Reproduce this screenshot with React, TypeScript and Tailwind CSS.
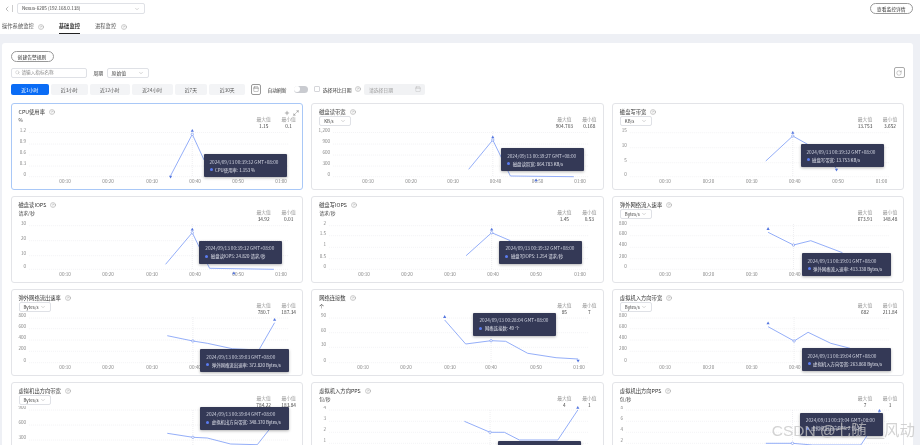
import { ChevronDown, ChevronLeft, CircleHelp, Calendar, RotateCw, Plus, Maximize2, Search } from 'lucide-react';

type Pt = [number, number];

type Chart = {
    title: string;
    unit?: string;
    select?: string;
    max: string;
    min: string;
    yLabels: string[];
    gridY: number[];
    gridX: [number, number];
    xLabels: number[];
    line: Pt[];
    ups?: Pt[];
    downs?: Pt[];
    dots?: Pt[];
    guide?: number;
    tip: { x: number; y: number; w: number; time: string; label: string; value: string };
    active?: boolean;
};

const col1X = [54, 97, 141, 184, 227, 270];
const col2X = [57, 100, 142, 184.5, 226.5, 269];
const col3X = [53, 96.4, 139.7, 182.7, 226, 269.4];
const grid5 = [29.5, 41, 52, 63, 73.7];
const timeLabels = ['00:10', '00:20', '00:30', '00:40', '00:50', '01:00'];

const charts: Chart[] = [
    {
        title: 'CPU使用率', unit: '%', max: '1.15', min: '0.1', yLabels: ['1.2', '0.9', '0.6', '0.3', '0'], gridY: grid5, gridX: [18, 278], xLabels: col1X,
        line: [[159.5, 72.7], [181.2, 31.3], [193, 57]], ups: [[181.2, 27.5]], downs: [[159.5, 74]], dots: [[181.2, 31.3]], guide: 181.2,
        tip: { x: 193, y: 51, w: 83, time: '2024/09/13 00:39:32 GMT+08:00', label: 'CPU使用率:', value: '1.153 %' }, active: true,
    },
    {
        title: '磁盘读带宽', select: 'KB/s', max: '904.703', min: '0.168', yLabels: ['1,200', '900', '600', '300', '0'], gridY: grid5, gridX: [22, 277], xLabels: col2X,
        line: [[157.6, 66.3], [181.7, 37], [199.3, 73], [262.7, 73.7]], ups: [[181.7, 34], [225, 77]], dots: [[181.7, 37]], guide: 181.7,
        tip: { x: 190, y: 45.3, w: 83, time: '2024/09/13 00:39:27 GMT+08:00', label: '磁盘读带宽:', value: '864.783 KB/s' },
    },
    {
        title: '磁盘写带宽', select: 'KB/s', max: '13.753', min: '3.652', yLabels: ['15', '10', '5', '0'], gridY: [29.7, 44.7, 59.7, 73.7], gridX: [17.7, 277], xLabels: col3X,
        line: [[153.7, 58], [180.7, 33], [195, 41], [224.4, 65.3]], ups: [[180.7, 29.5]], downs: [[224.4, 67]], dots: [[180.7, 33]], guide: 180.7,
        tip: { x: 188.7, y: 41.3, w: 83, time: '2024/09/13 00:39:32 GMT+08:00', label: '磁盘写带宽:', value: '13.753 KB/s' },
    },
    {
        title: '磁盘读IOPS', unit: '请求/秒', max: '34.92', min: '0.01', yLabels: ['30', '20', '10', '0'], gridY: [29.7, 44.7, 59.7, 73.3], gridX: [18, 278], xLabels: col1X,
        line: [[154.5, 68.3], [181.2, 36.7], [198.5, 72.3], [262.8, 73.3]], ups: [[181.2, 33.3], [222.8, 77]], dots: [[181.2, 36.7]], guide: 181.2,
        tip: { x: 188.8, y: 44.7, w: 83, time: '2024/09/13 00:39:32 GMT+08:00', label: '磁盘读IOPS:', value: '24.820 请求/秒' },
    },
    {
        title: '磁盘写IOPS', unit: '请求/秒', max: '1.45', min: '0.53', yLabels: ['2', '1.5', '1', '0.5', '0'], gridY: [29.7, 39.7, 51.3, 62.7, 73.3], gridX: [18, 277], xLabels: [53, 96, 139, 182, 225, 269],
        line: [[155, 59.7], [180.6, 36.7], [199.3, 44.7]], ups: [[180.6, 33.3]], dots: [[180.6, 36.7]], guide: 180.6,
        tip: { x: 188.3, y: 44.7, w: 83, time: '2024/09/13 00:39:32 GMT+08:00', label: '磁盘写IOPS:', value: '1.254 请求/秒' },
    },
    {
        title: '弹外网络流入速率', select: 'Bytes/s', max: '673.91', min: '148.48', yLabels: ['800', '600', '400', '200', '0'], gridY: [29.7, 39.7, 51.3, 62.7, 73.3], gridX: [17.7, 277], xLabels: col3X,
        line: [[156, 36.3], [181.4, 49], [198.7, 44.7], [230.4, 56.7]], ups: [[156, 32.7]], dots: [[181.4, 49]], guide: 181.4,
        tip: { x: 189.7, y: 57.3, w: 89, time: '2024/09/13 00:39:01 GMT+08:00', label: '弹外网络流入速率:', value: '413.330 Bytes/s' },
    },
    {
        title: '弹外网络流出速率', select: 'Bytes/s', max: '780.7', min: '187.34', yLabels: ['800', '600', '400', '200', '0'], gridY: [29, 39.7, 51, 62.3, 73.7], gridX: [18, 278], xLabels: col1X,
        line: [[156.2, 46.7], [181.8, 52], [196.2, 54.3], [221.2, 59.7], [247.8, 61], [263.5, 33.7]], ups: [[263.5, 30.5]], dots: [[181.8, 52]], guide: 181.8,
        tip: { x: 189.8, y: 60.3, w: 89, time: '2024/09/13 00:39:03 GMT+08:00', label: '弹外网络流出速率:', value: '372.820 Bytes/s' },
    },
    {
        title: '网络连接数', unit: '个', max: '85', min: '7', yLabels: ['90', '60', '30', '0'], gridY: [29, 43.7, 58.3, 73.7], gridX: [18, 277], xLabels: [52, 95, 139, 180, 225, 268],
        line: [[133.6, 31], [154.6, 55], [180, 51.7], [194.6, 52.3], [216.6, 64.3], [245, 68.7], [267, 70]], ups: [[133.6, 27.7]], downs: [[267, 72]], dots: [[180, 51.7]], guide: 180,
        tip: { x: 162.3, y: 23.7, w: 83, time: '2024/09/13 00:28:04 GMT+08:00', label: '网络连接数:', value: '49 个' },
    },
    {
        title: '虚拟机入方向带宽', select: 'Bytes/s', max: '682', min: '211.84', yLabels: ['800', '600', '400', '200', '0'], gridY: [29, 39.7, 51, 62.3, 73.7], gridX: [17.7, 277], xLabels: col3X,
        line: [[156, 37.7], [182, 52], [196, 43.3], [218.7, 54.3], [238, 59.3]], ups: [[156, 34]], dots: [[182, 52]], guide: 182,
        tip: { x: 189.7, y: 59.3, w: 89, time: '2024/09/13 00:39:04 GMT+08:00', label: '虚拟机入方向带宽:', value: '263.860 Bytes/s' },
    },
    {
        title: '虚拟机出方向带宽', select: 'Bytes/s', max: '784.22', min: '183.84', yLabels: ['900', '600', '300', '0'], gridY: [28, 43, 58, 73], gridX: [18, 278], xLabels: col1X,
        line: [[156.2, 51.3], [181.8, 55.3], [196.2, 56], [219.5, 62], [246.2, 62.7], [257.8, 48]], dots: [[181.8, 55.3]], guide: 181.8,
        tip: { x: 189.8, y: 24.7, w: 89, time: '2024/09/13 00:39:04 GMT+08:00', label: '虚拟机出方向带宽:', value: '348.370 Bytes/s' },
    },
    {
        title: '虚拟机入方向PPS', unit: '包/秒', max: '4', min: '1', yLabels: ['4', '3', '2', '1', '0'], gridY: [28, 39.3, 50.3, 61.3, 72.3], gridX: [18, 277], xLabels: col2X,
        line: [[153.3, 39.3], [179, 50.3], [193.3, 50.3], [208.3, 58], [246.7, 58], [266.7, 28]], ups: [[266.7, 25.5]], dots: [[179, 50.3]], guide: 179,
        tip: { x: 187, y: 58.7, w: 83, time: '2024/09/13 00:39:04 GMT+08:00', label: '虚拟机入方向PPS:', value: '2 包/秒' },
    },
    {
        title: '虚拟机出方向PPS', unit: '包/秒', max: '7', min: '1', yLabels: ['8', '6', '4', '2', '0'], gridY: [28, 39.3, 50.3, 61.3, 72.3], gridX: [14, 277], xLabels: col3X,
        line: [[153.7, 61.3], [180.4, 61.3], [200.4, 63], [248.7, 63], [255.4, 53], [267.4, 29.7]], ups: [[267.4, 28.5], [195.4, 46.3]], dots: [[180.4, 61.3]], guide: 180.4,
        tip: { x: 188, y: 30.7, w: 83, time: '2024/09/13 00:39:04 GMT+08:00', label: '虚拟机出方向PPS:', value: '2 包/秒' },
    },
];

const ranges = [
    { label: '近1小时', w: 'w-[38.5px]' },
    { label: '近3小时', w: 'w-[37px]' },
    { label: '近12小时', w: 'w-[40px]' },
    { label: '近24小时', w: 'w-[41px]' },
    { label: '近7天', w: 'w-[32.5px]' },
    { label: '近30天', w: 'w-[36.5px]' },
];

function Help({ className = '' }: { className?: string }) {
    return <CircleHelp size={6} strokeWidth={1.4} className={`shrink-0 text-[#777] ${className}`} />;
}

function MiniSelect({ label, className }: { label: string; className: string }) {
    return (
        <div className={`flex items-center justify-between rounded-[2px] border border-[#dfe1e6] bg-white pl-[4px] pr-[4px] text-[#444] ${className}`}>
            <span>{label}</span>
            <ChevronDown size={6} strokeWidth={1.2} className="text-[#777]" />
        </div>
    );
}

function Stat({ label, value }: { label: string; value: string }) {
    return (
        <div className="flex w-[15px] flex-col items-center whitespace-nowrap">
            <div className="text-[#999]">{label}</div>
            <div className="text-[#444]">{value}</div>
        </div>
    );
}

function Card({ chart }: { chart: Chart }) {
    const { tip } = chart;
    return (
        <div className={`relative h-[87px] rounded-[3px] border bg-white ${chart.active ? 'border-[#a9c8f7]' : 'border-[#e3e4e8]'}`}>
            <div className="flex h-[23px] justify-between pl-[7px] pr-[6px] pt-[5px]">
                <div>
                    <div className="flex items-center gap-[4px] text-[5.3px] leading-[6px] text-[#333]">
                        {chart.title}
                        <Help />
                    </div>
                    {chart.unit && <div className="mt-[2px] text-[4.8px] leading-[5px] text-[#444]">{chart.unit}</div>}
                    {chart.select && <MiniSelect label={chart.select} className="mt-[1px] h-[10px] w-[32px] text-[4.4px]" />}
                </div>
                <div className="flex gap-[10px] pt-[7px] text-[4.8px] leading-[6.5px]">
                    <Stat label="最大值" value={chart.max} />
                    <Stat label="最小值" value={chart.min} />
                </div>
            </div>

            {chart.active && (
                <div className="absolute right-[3px] top-[6px] flex items-center gap-[3.5px] text-[#444]">
                    <Plus size={6} strokeWidth={1.6} />
                    <Maximize2 size={6} strokeWidth={1.4} />
                </div>
            )}

            <svg viewBox="1 24 290.5 62" className="block h-[62px] w-full">
                {chart.gridY.map((y, i) => (
                    <g key={i}>
                        <line x1={chart.gridX[0]} x2={chart.gridX[1]} y1={y} y2={y} stroke="#e6e7ea" strokeWidth={0.5} strokeDasharray="1 1" />
                        <text x={chart.gridX[0] - 3} y={y - 1} textAnchor="end" fontSize={4.6} fill="#888">{chart.yLabels[i]}</text>
                    </g>
                ))}
                {chart.xLabels.map((x, i) => (
                    <text key={i} x={x} y={80} textAnchor="middle" fontSize={4.6} fill="#888">{timeLabels[i]}</text>
                ))}
                {chart.guide !== undefined && (
                    <line x1={chart.guide} x2={chart.guide} y1={28} y2={chart.gridY[chart.gridY.length - 1]} stroke="#dcdde2" strokeWidth={0.5} strokeDasharray="1 1" />
                )}
                <polyline points={chart.line.map((p) => p.join(',')).join(' ')} fill="none" stroke="#88a5f7" strokeWidth={0.9} strokeLinejoin="round" />
                {chart.dots?.map(([x, y], i) => (
                    <circle key={i} cx={x} cy={y} r={1.2} fill="#fff" stroke="#6f8fee" strokeWidth={0.6} />
                ))}
                {chart.ups?.map(([x, y], i) => (
                    <polygon key={i} points={`${x},${y - 1.6} ${x - 1.6},${y + 1.2} ${x + 1.6},${y + 1.2}`} fill="#5577e0" />
                ))}
                {chart.downs?.map(([x, y], i) => (
                    <polygon key={i} points={`${x},${y + 1.6} ${x - 1.6},${y - 1.2} ${x + 1.6},${y - 1.2}`} fill="#5577e0" />
                ))}
            </svg>

            {/* tooltip of the hovered point, placed from the chart's data */}
            <div
                className="absolute z-10 flex h-[23px] flex-col justify-center gap-[2px] rounded-[1px] bg-[#343956] pl-[6px] leading-[6px] shadow-[0_1px_3px_rgba(0,0,0,0.3)]"
                style={{ left: tip.x - 1, top: tip.y - 1, width: tip.w }}
            >
                <div className="whitespace-nowrap text-[4.7px] text-[#cfd2df]">{tip.time}</div>
                <div className="flex items-center gap-[2.5px] whitespace-nowrap text-[4.4px] text-[#dfe1ea]">
                    <span className="h-[3px] w-[3px] rounded-full bg-[#5b7cf0]" />
                    {tip.label} {tip.value}
                </div>
            </div>
        </div>
    );
}

export default function App() {
    return (
        <div className="relative h-screen w-full overflow-hidden bg-[#eef0f5] font-['Noto_Sans_CJK_SC','Noto_Sans',sans-serif] blur-[0.4px]">
            {/* Top bar */}
            <div className="bg-white">
                <div className="flex h-[17px] items-center pl-[3px] pr-[7px]">
                    <ChevronLeft size={8} strokeWidth={1.2} className="text-[#555]" />
                    <div className="ml-[1px] h-[7px] w-px bg-[#ccc]" />
                    <MiniSelect label="Nexus-6205 (192.168.0.138)" className="ml-[4px] h-[10.5px] w-[128px] text-[4.6px]" />
                    <div className="ml-auto flex h-[10.5px] w-[43.5px] items-center justify-center rounded-full border border-[#999] text-[4.8px] text-[#333]">
                        查看监控详情
                    </div>
                </div>
                <div className="flex h-[17px] items-center pl-[2px] pt-[2px] text-[5.3px] text-[#555]">
                    <span>操作系统监控</span>
                    <Help className="ml-[4px]" />
                    <div className="relative ml-[15px] flex h-full items-center font-medium text-[#222]">
                        基础监控
                        <div className="absolute bottom-0 left-0 right-0 h-[1px] bg-[#222]" />
                    </div>
                    <span className="ml-[15px]">进程监控</span>
                    <Help className="ml-[5px]" />
                </div>
            </div>

            {/* Main panel */}
            <div className="ml-[2px] mr-[7px] mt-[9px] rounded-t-[3px] bg-white px-[8.5px] pb-4 pt-[8px]">
                <div className="flex h-[10.5px] w-[43px] items-center justify-center rounded-full border border-[#999] text-[4.8px] text-[#333]">
                    创建告警规则
                </div>

                <div className="mt-[6px] flex h-[10px] items-center">
                    <div className="flex h-full w-[76px] items-center gap-[2px] rounded-[2px] border border-[#dfe1e6] pl-[3px] text-[4.6px] text-[#888]">
                        <Search size={5} strokeWidth={1.2} />
                        请输入指标名称
                    </div>
                    <span className="ml-[7px] text-[4.8px] text-[#333]">周期</span>
                    <MiniSelect label="原始值" className="ml-[3.5px] h-full w-[42px] text-[4.8px]" />
                    <div className="ml-auto flex h-[10.5px] w-[10.5px] items-center justify-center rounded-[2px] border border-[#aaa] text-[#555]">
                        <RotateCw size={6} strokeWidth={1.2} />
                    </div>
                </div>

                <div className="mt-[6.5px] flex h-[10.5px] items-center text-[4.8px]">
                    <div className="flex h-full gap-[1.9px]">
                        {ranges.map((r, i) => (
                            <div
                                key={r.label}
                                className={`flex items-center justify-center rounded-[2px] ${r.w} ${i === 0 ? 'bg-[#0a6cf5] text-white' : 'bg-[#f3f4f6] text-[#555]'}`}
                            >
                                {r.label}
                            </div>
                        ))}
                    </div>
                    <div className="ml-[5.5px] flex h-[10.5px] w-[10.5px] items-center justify-center rounded-[2px] border border-[#999] text-[#444]">
                        <Calendar size={6} strokeWidth={1.2} />
                    </div>
                    <span className="ml-[6px] text-[#333]">自动刷新</span>
                    <div className="ml-[7px] flex h-[7px] w-[14px] items-center rounded-full bg-[#c9cbd0] pl-[0.5px]">
                        <div className="h-[6px] w-[6px] rounded-full bg-white" />
                    </div>
                    <div className="ml-[6px] h-[6px] w-[6px] rounded-[1px] border border-[#d5d6da]" />
                    <span className="ml-[3px] text-[#333]">选择环比日期</span>
                    <Help className="ml-[4px]" />
                    <div className="ml-[3px] flex h-[11px] w-[61px] items-center justify-between rounded-[2px] bg-[#f1f2f4] px-[4.5px] text-[#999]">
                        请选择日期
                        <Calendar size={6} strokeWidth={1} />
                    </div>
                </div>

                <div className="mt-[8.5px] grid grid-cols-3 gap-x-[8px] gap-y-[6px]">
                    {charts.map((chart) => (
                        <Card key={chart.title} chart={chart} />
                    ))}
                </div>
            </div>

            <div className="absolute bottom-[3px] right-[5px] z-20 whitespace-nowrap font-['Liberation_Sans','Noto_Sans_CJK_SC',sans-serif] text-[15.5px] text-[#c4c4c4]/75">
                CSDN @七随__风动
            </div>
        </div>
    );
}
